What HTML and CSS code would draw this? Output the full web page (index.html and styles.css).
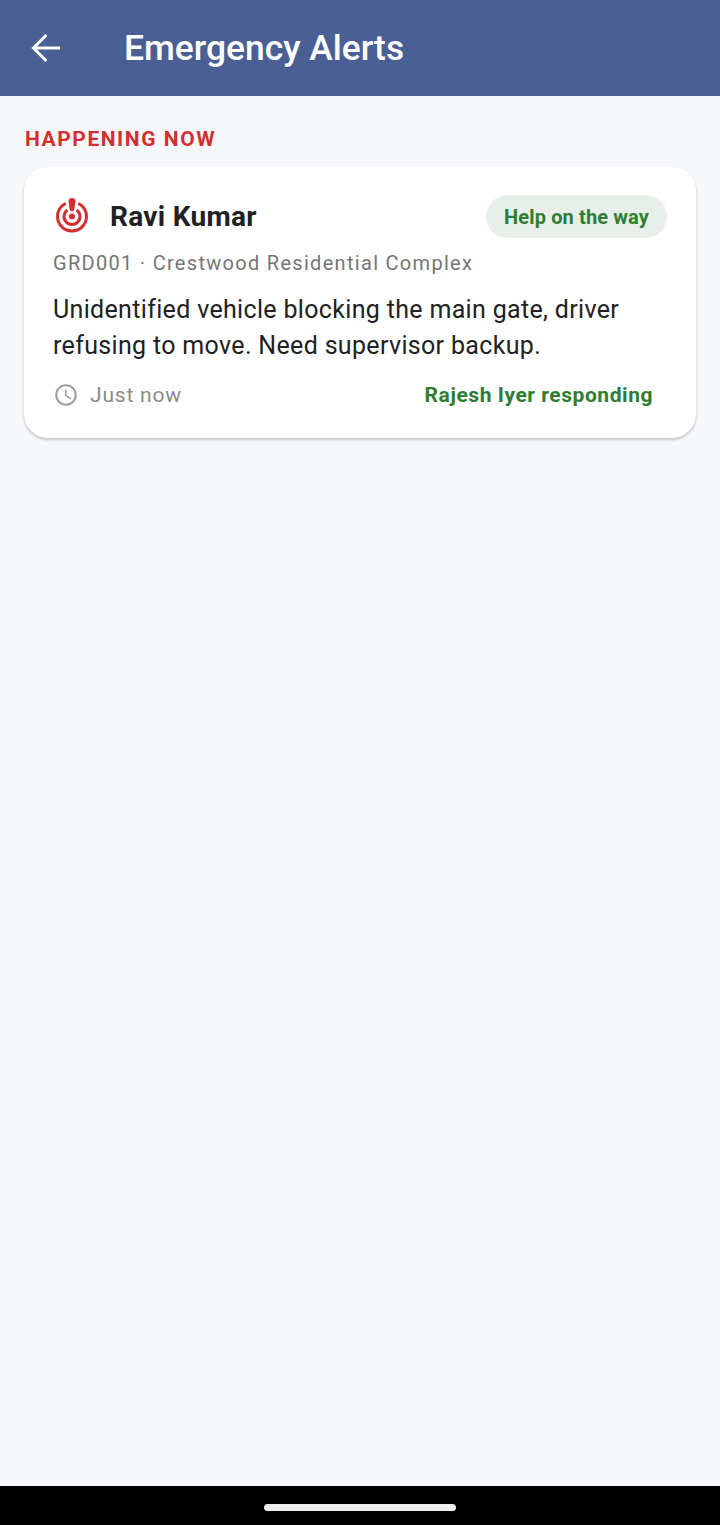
FILE: index.html
```html
<!DOCTYPE html>
<html lang="en">
<head>
  <meta charset="UTF-8" />
  <meta name="viewport" content="width=device-width, initial-scale=1" />
  <title>Emergency Alerts</title>
  <link rel="stylesheet" href="styles.css">
</head>
<body>
  <header class="app-bar">
    <button class="back-btn" aria-label="Back">
      <svg width="42" height="42" viewBox="0 0 24 24" fill="none" stroke="#fff" stroke-width="1.7"><path d="M20 12H5.4M12.2 4.6 4.8 12l7.4 7.4"/></svg>
    </button>
    <h1 class="app-title">Emergency Alerts</h1>
  </header>

  <main class="content">
    <h2 class="section-label">HAPPENING NOW</h2>

    <section class="alert-card">
      <div class="alert-head">
        <svg class="alert-icon" width="38" height="38" viewBox="0 0 38 38" fill="none">
          <path stroke="#d32f2f" stroke-width="3" d="M12.8 5.4a14.5 14.5 0 1 0 12.4 0"/>
          <path stroke="#d32f2f" stroke-width="3" d="M14.4 11.95a8 8 0 1 0 9.2 0"/>
          <circle cx="19" cy="18.5" r="3" fill="#d32f2f"/>
          <path fill="#d32f2f" d="M15.5 3.3a3.5 3.3 0 0 1 7 0l-1.1 7.6a2.4 2.4 0 0 1-4.8 0z"/>
        </svg>
        <span class="guard-name">Ravi Kumar</span>
        <span class="status-pill">Help on the way</span>
      </div>
      <p class="guard-meta">GRD001 · Crestwood Residential Complex</p>
      <p class="alert-msg">Unidentified vehicle blocking the main gate, driver refusing to move. Need supervisor backup.</p>
      <div class="alert-foot">
        <svg width="26" height="26" viewBox="0 0 24 24"><path fill="#9e9e9e" d="M11.99 2C6.47 2 2 6.48 2 12s4.47 10 9.99 10C17.52 22 22 17.52 22 12S17.52 2 11.99 2zM12 20c-4.42 0-8-3.58-8-8s3.58-8 8-8 8 3.58 8 8-3.58 8-8 8zm.5-13H11v6l5.25 3.15.75-1.23-4.5-2.67z"/></svg>
        <span class="alert-time">Just now</span>
        <span class="responder">Rajesh Iyer responding</span>
      </div>
    </section>
  </main>

  <div class="nav-bar">
    <div class="nav-handle"></div>
  </div>
</body>
</html>
```

FILE: styles.css
```css
* {
  box-sizing: border-box;
}
body {
  margin: 0;
  height: 1525px;
  display: flex;
  flex-direction: column;
  font-family: Roboto, sans-serif;
  background: #f5f7fb;
}
.app-bar {
  height: 96px;
  display: flex;
  align-items: center;
  padding-left: 25px;
  background: #4a5f94;
}
.back-btn {
  display: flex;
  padding: 0;
  border: none;
  background: none;
}
.app-title {
  margin: 0 0 0 57px;
  font-size: 35.4px;
  font-weight: 500;
  color: #fff;
}
.content {
  flex: 1;
  padding: 30px 24px 0;
}
.section-label {
  margin: 0 0 15px 1px;
  font-size: 21px;
  line-height: 26px;
  font-weight: 700;
  letter-spacing: 1.55px;
  color: #d32f2f;
}
.alert-card {
  height: 271px;
  padding: 28px 29px 0;
  background: #fff;
  border-radius: 24px;
  box-shadow: 0 2px 3px rgba(0, 0, 0, 0.22);
}
.alert-head {
  display: flex;
  align-items: center;
  height: 43px;
}
.alert-icon {
  flex-shrink: 0;
}
.guard-name {
  margin-left: 19px;
  font-size: 28px;
  font-weight: 700;
  letter-spacing: 0.3px;
  color: #212121;
}
.status-pill {
  margin-left: auto;
  padding: 1px 18px 0;
  line-height: 42px;
  font-size: 20px;
  font-weight: 700;
  letter-spacing: 0.13px;
  color: #2e7d32;
  background: #e8efe8;
  border-radius: 22px;
}
.guard-meta {
  margin: 12px 0 0;
  font-size: 20px;
  line-height: 26px;
  letter-spacing: 1.3px;
  color: #757575;
}
.alert-msg {
  margin: 16px 0 0;
  font-size: 25px;
  line-height: 36px;
  letter-spacing: 0.33px;
  color: #212121;
}
.alert-foot {
  display: flex;
  align-items: center;
  margin-top: 18px;
  padding-right: 14px;
}
.alert-time {
  margin-left: 11px;
  font-size: 21px;
  letter-spacing: 0.8px;
  color: #8a8a8a;
}
.responder {
  margin-left: auto;
  font-size: 21px;
  font-weight: 700;
  letter-spacing: 0.55px;
  color: #2e7d32;
}
.nav-bar {
  height: 39px;
  display: flex;
  justify-content: center;
  padding-top: 18px;
  background: #000;
}
.nav-handle {
  width: 192px;
  height: 7px;
  background: #eee;
  border-radius: 4px;
}
```
